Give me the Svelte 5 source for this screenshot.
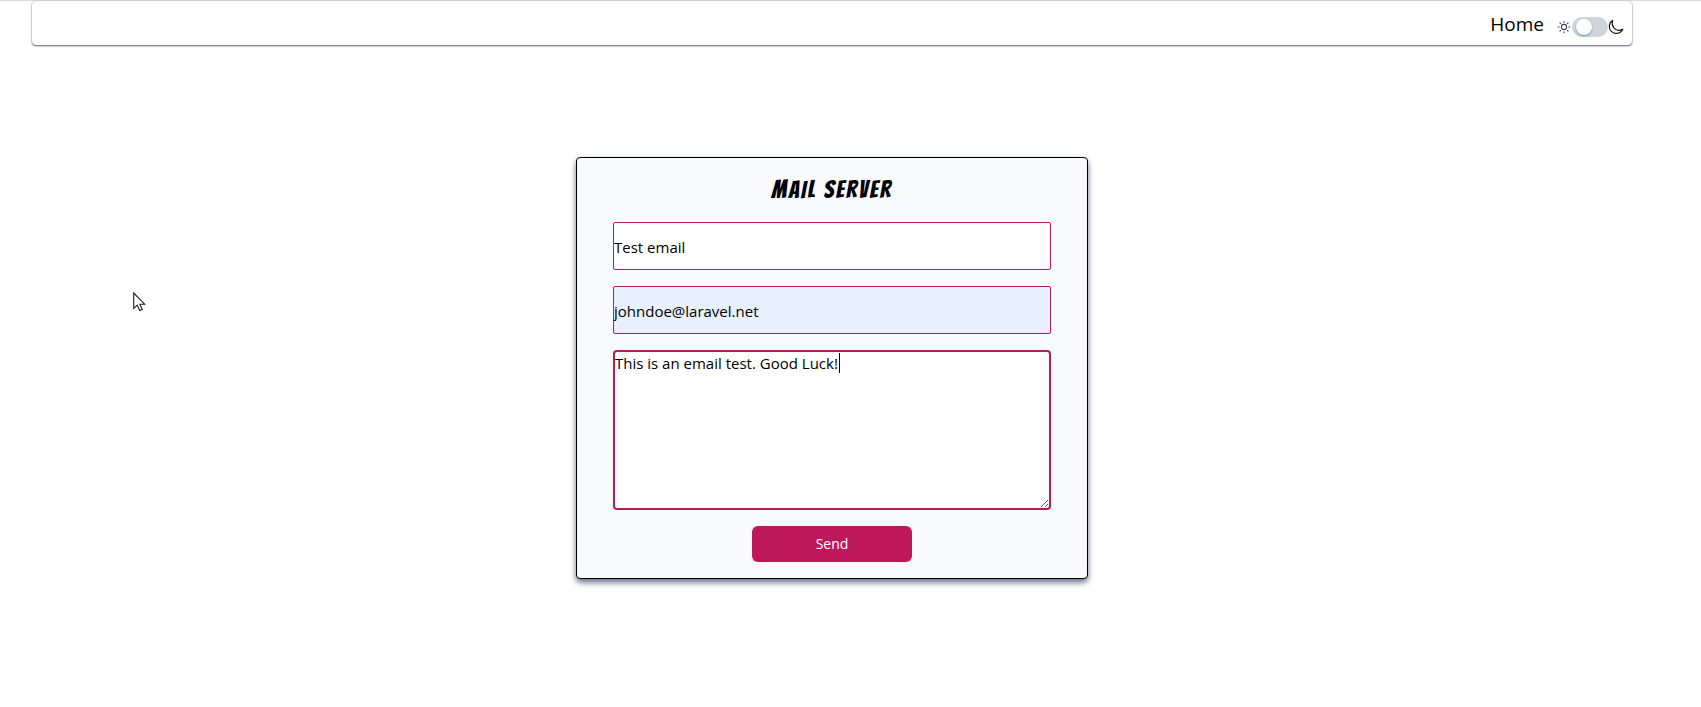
<script>
  let subject = $state('Test email');
  let email = $state('johndoe@laravel.net');
  let message = $state('This is an email test. Good Luck!');
  let dark = $state(false);
</script>

<div class="page">
  <nav class="bar">
    <a href="#home">Home</a>
    <div class="theme">
      <svg class="sun" viewBox="0 0 14 14" width="14" height="14" aria-hidden="true">
        <g fill="none" stroke="#3b4252" stroke-width="1.1" stroke-linecap="round">
          <circle cx="7" cy="7" r="2.6" />
          <path d="M7 1.2v1M7 11.8v1M1.2 7h1M11.8 7h1M2.9 2.9l.7.7M10.4 10.4l.7.7M2.9 11.1l.7-.7M10.4 3.6l.7-.7" />
        </g>
      </svg>
      <input class="switch" type="checkbox" aria-label="Dark mode" bind:checked={dark} />
      <svg class="moon" viewBox="0 0 16 16" width="16" height="16" aria-hidden="true">
        <path d="M4.6 1.4C.6 3.8.3 9.2 3.3 12.3c3.4 3.4 9.2 2.4 11.4-1.9C11.2 12 7.6 11.2 5.7 8.6 4.1 6.4 3.8 3.9 4.6 1.4z" fill="none" stroke="#15171c" stroke-width="1.2" stroke-linejoin="round" />
      </svg>
    </div>
  </nav>

  <main>
    <form class="card" onsubmit={(e) => e.preventDefault()}>
      <h1>MAIL SERVER</h1>
      <input class="field" type="text" aria-label="Subject" bind:value={subject} />
      <input class="field filled" type="email" aria-label="Email" bind:value={email} />
      <div class="message">
        <textarea aria-label="Message" spellcheck="false" bind:value={message}></textarea>
        <span class="caret"></span>
      </div>
      <button type="submit">Send</button>
    </form>
  </main>

  <svg class="pointer" viewBox="0 0 13 20" width="13" height="20" aria-hidden="true">
    <path d="M.7 1v15.4l3.5-3.3 2.5 5.4 2.6-1.1-2.4-5.2h4.8z" fill="#fff" stroke="#1c1d2b" stroke-width="1.1" />
  </svg>
</div>

<style>
  :global(body) {
    background: #fff;
  }

  .page {
    box-sizing: border-box;
    padding: 0 69px 0 32px;
    border-top: 1px solid #d9d9d9;
    font-family: 'Segoe UI', 'Open Sans', sans-serif;
    color: #000;
  }

  .bar {
    display: flex;
    justify-content: flex-end;
    align-items: center;
    gap: 13px;
    height: 44px;
    box-sizing: border-box;
    padding: 8px 8px 0 0;
    border-radius: 4px;
    box-shadow: 0 1px 2px #5b6078, 0 0 1px #bbb;
  }

  .bar a {
    font-size: 19px;
    line-height: 28px;
    padding-bottom: 6px;
    color: #000;
    text-decoration: none;
  }

  .theme {
    display: flex;
    align-items: center;
  }

  .theme svg {
    display: block;
  }

  .switch {
    appearance: none;
    display: flex;
    align-items: center;
    box-sizing: border-box;
    width: 36px;
    height: 20px;
    margin: 0 0 0 1px;
    padding: 0 4px;
    border-radius: 10px;
    background: #d1d5db;
  }

  .switch::before {
    content: '';
    width: 16px;
    height: 16px;
    border-radius: 50%;
    background: #fff;
    box-shadow: 0 1px 2px #4f98b0;
  }

  .switch:checked {
    justify-content: flex-end;
  }

  main {
    display: flex;
    justify-content: center;
    padding: 112px 0 32px;
  }

  .card {
    display: flex;
    flex-direction: column;
    gap: 16px;
    box-sizing: border-box;
    width: 100%;
    max-width: 512px;
    padding: 16px 36px;
    border: 1px solid #000;
    border-radius: 4px;
    background: #f9fafc;
    box-shadow: 0 4px 6px -1px #6b7085, 0 2px 6px -1px #aaafc0;
  }

  h1 {
    margin: 0;
    text-align: center;
    font: 400 24px/32px Bangers, 'Liberation Sans Narrow', 'Liberation Sans', sans-serif;
    letter-spacing: 2px;
  }

  .field,
  textarea {
    display: block;
    box-sizing: border-box;
    width: 100%;
    margin: 0;
    border: 1px solid #be185d;
    border-radius: 2px;
    outline: none;
    background: #fff;
    color: #000;
    font: 15px/22px 'Segoe UI', 'Open Sans', sans-serif;
  }

  .field {
    height: 48px;
    padding: 2px 0 0;
  }

  .filled {
    background: #e8f0fe;
  }

  .message {
    position: relative;
  }

  textarea {
    height: 160px;
    padding: 0;
    border-width: 2px;
    border-radius: 4px;
    resize: vertical;
  }

  .caret {
    position: absolute;
    top: 3px;
    left: 226px;
    width: 1px;
    height: 20px;
    background: #000;
  }

  button {
    align-self: center;
    width: 160px;
    height: 36px;
    padding: 0;
    border: 0;
    border-radius: 6px;
    background: #be185d;
    color: #fff;
    font: 14px/20px 'Segoe UI', 'Open Sans', sans-serif;
  }

  .pointer {
    position: absolute;
    left: 133px;
    top: 292px;
  }
</style>
